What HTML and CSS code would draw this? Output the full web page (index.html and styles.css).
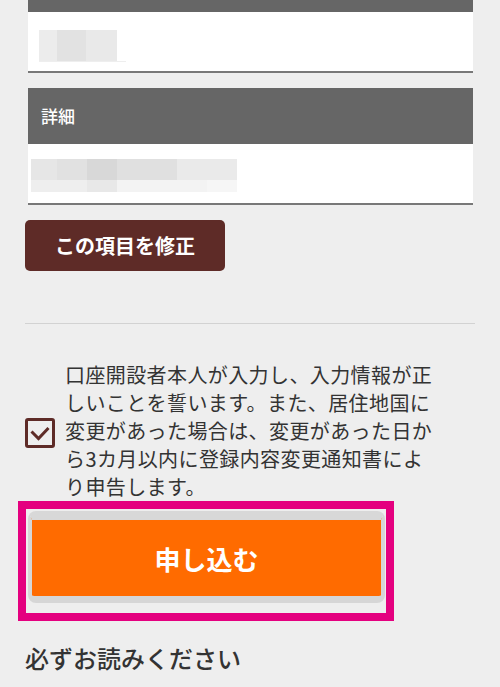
FILE: index.html
```html
<!DOCTYPE html>
<html lang="ja">
<head>
    <meta charset="utf-8">
    <title>入力内容の確認</title>
    <link rel="stylesheet" href="styles.css">
</head>
<body>
    <div class="page">
        <div class="field field-first">
            <div class="field-head"></div>
            <div class="field-value value-name">
                <div class="blur blur-name"></div>
            </div>
        </div>
        <div class="field">
            <div class="field-head">詳細</div>
            <div class="field-value value-detail">
                <div class="blur blur-detail"></div>
            </div>
        </div>
        <button class="edit-btn" type="button">この項目を修正</button>

        <hr class="divider">

        <label class="agree">
            <span class="checkbox">
                <svg width="20" height="15" viewBox="0 0 20 15">
                    <polyline points="1.5,5.5 8.5,12.5 18.5,2" fill="none" stroke="#5e2b27" stroke-width="3"/>
                </svg>
            </span>
            <span class="agree-text">口座開設者本人が入力し、入力情報が正しいことを誓います。また、居住地国に変更があった場合は、変更があった日から3カ月以内に登録内容変更通知書により申告します。</span>
        </label>

        <div class="apply-frame">
            <button class="apply-btn" type="button">申し込む</button>
        </div>

        <h3 class="notice-title">必ずお読みください</h3>
    </div>
</body>
</html>
```

FILE: styles.css
```css
body {
    margin: 0;
    background: #eeeeee;
    font-family: "Noto Sans CJK JP", "Noto Sans", sans-serif;
    color: #333;
}

.page {
    padding: 0 25px;
}

.field {
    margin: 0 2px 15px 3px;
}

.field-first {
    margin-top: -44px;
}

.field-head {
    height: 56px;
    background: #666666;
    color: #fff;
    font-size: 17px;
    font-weight: 500;
    line-height: 56px;
    padding-left: 13px;
}

.field-value {
    background: #fff;
    height: 59px;
    border-bottom: 2px solid #787878;
}

.value-name {
    padding-left: 11px;
}

.value-name .blur {
    position: relative;
    top: 18px;
}

.value-detail .blur {
    position: relative;
    top: 15px;
    left: 3px;
}

.blur-name {
    width: 87px;
    height: 31px;
    background: linear-gradient(to right, #ececec 0 18px, #e2e2e2 18px 47px, #e9e9e9 47px 78px, #fff 78px);
    border-bottom: 1px solid #eeeeee;
}

.blur-detail {
    width: 206px;
    height: 33px;
    background:
        linear-gradient(to right, #e6e6e6 0 26px, #e1e1e1 26px 56px, #d8d8d8 56px 86px, #e0e0e0 86px 146px, #eaeaea 146px) top / 100% 21px no-repeat,
        linear-gradient(to right, #eeeeee 0 56px, #e8e8e8 56px 86px, #f3f3f3 86px 176px, #f6f6f6 176px) bottom / 100% 12px no-repeat;
}

.edit-btn {
    display: block;
    width: 200px;
    height: 51px;
    border: none;
    border-radius: 5px;
    background: #5e2b27;
    color: #fff;
    font-family: inherit;
    font-size: 20px;
    font-weight: bold;
    cursor: pointer;
}

.divider {
    margin: 52px 0 0;
    border: none;
    border-top: 1px solid #d2d2d2;
}

.agree {
    display: flex;
    align-items: center;
    gap: 10px;
    margin-top: 37px;
}

.checkbox {
    flex: none;
    width: 24px;
    height: 24px;
    border: 3px solid #5e2b27;
    border-radius: 3px;
    display: flex;
    align-items: center;
    justify-content: center;
    margin-top: 4px;
}

.agree-text {
    font-size: 20px;
    line-height: 28px;
    letter-spacing: 0.4px;
    width: 372px;
}

.apply-frame {
    margin: 0 0 0 -7px;
    width: 357px;
    border: 8px solid #e4007f;
    padding: 2px 1px 10px 2px;
}

.apply-btn {
    display: block;
    width: 100%;
    height: 92px;
    border: 4px solid #d6d6d6;
    border-top: 9px solid #d8d8d8;
    border-bottom-width: 7px;
    border-radius: 8px;
    background: #ff6b00;
    color: #fff;
    font-family: inherit;
    font-size: 26px;
    font-weight: bold;
    cursor: pointer;
}

.notice-title {
    margin: 21px 0 0;
    font-size: 24px;
    line-height: 32px;
    font-weight: 500;
    color: #333;
}
```
